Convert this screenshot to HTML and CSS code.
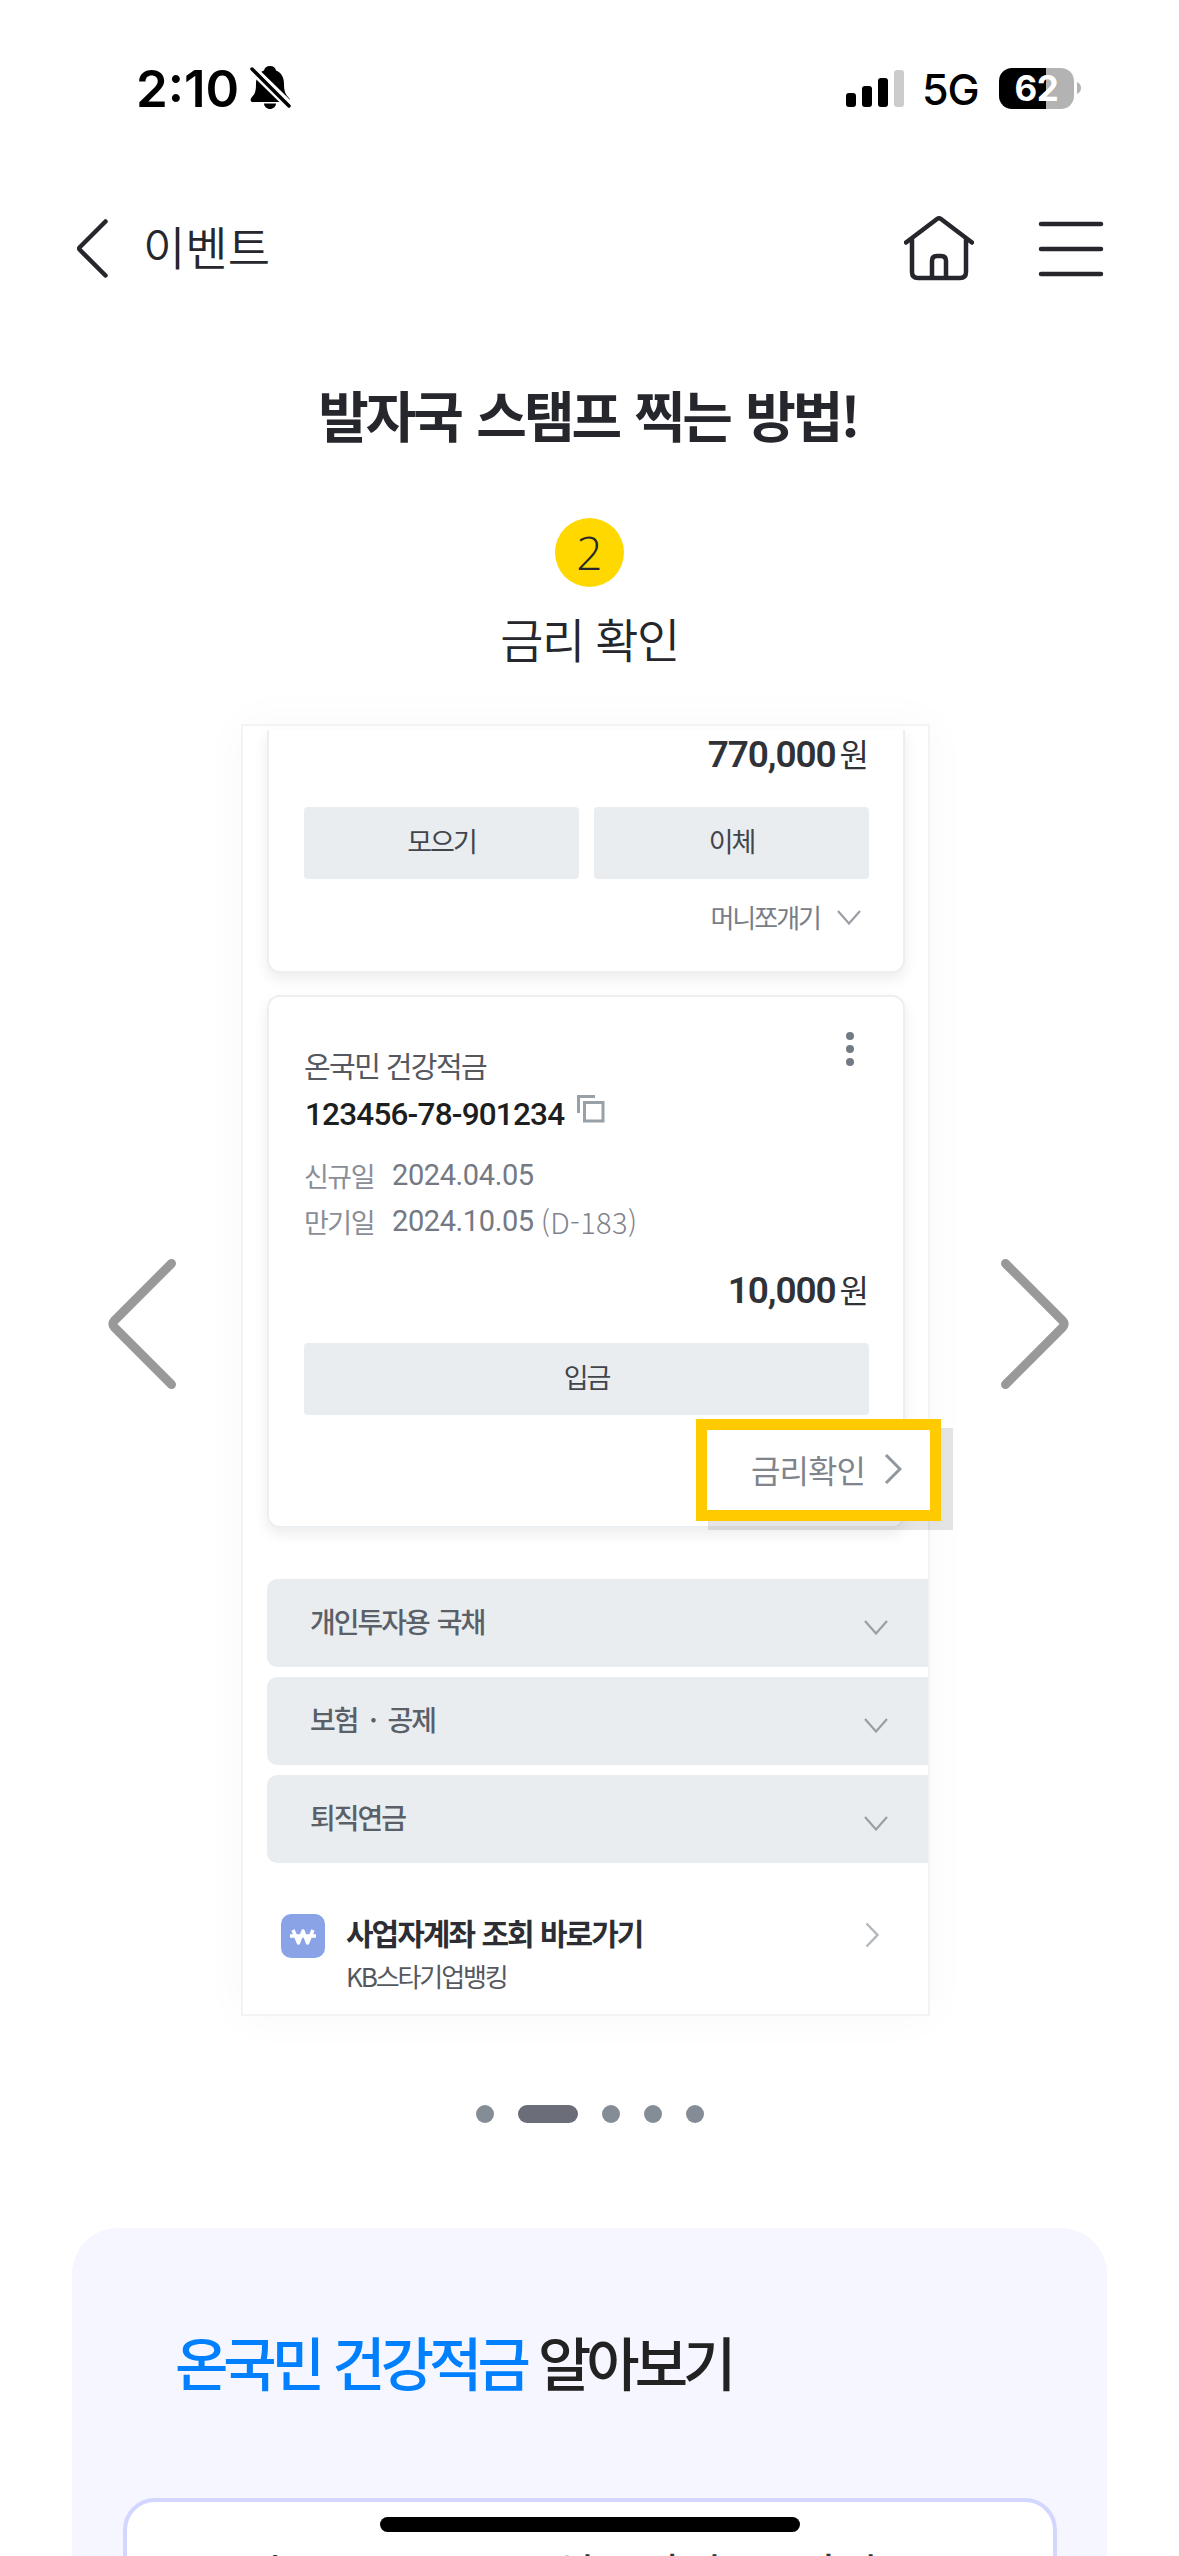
FILE: index.html
```html
<!DOCTYPE html>
<html lang="ko">
<head>
  <meta charset="UTF-8" />
  <title>이벤트</title>
  <meta name="viewport" content="width=device-width, initial-scale=1" />
  <link rel="stylesheet" href="styles.css">
</head>
<body>
  <div class="status-bar">
    <div class="status-left">
      <span class="time">2:10</span>
      <svg class="bell" width="42" height="46" viewBox="0 0 42 46">
        <path d="M20 1c3.500 0 5.500 2 6 4.500C32 8 34 13 34 19c0 8 2 11 5 14 2 2 1 4-1 4H3c-3 0-3-3-1-5 3-3 4-6 4-13C6 12 9 7.500 14 5.500 14.500 3 16.500 1 20 1z" />
        <path d="M14 38.500h12c0 3-3 5.500-6 5.500s-6-2.500-6-5.500z" />
        <path d="M1 3l40 39" stroke="#fff" stroke-width="9" />
        <path d="M2 4l37 37" stroke="#000" stroke-width="3.500" stroke-linecap="round" />
      </svg>
    </div>
    <div class="status-right">
      <div class="signal"><i class="b1"></i><i class="b2"></i><i class="b3"></i><i class="b4"></i></div>
      <span class="network">5G</span>
      <div class="battery">62</div>
      <svg class="battery-cap" width="4" height="12" viewBox="0 0 4 12"><path d="M0 0c2.500 1 4 3 4 6s-1.500 5-4 6z" fill="#b3b3b3" /></svg>
    </div>
  </div>

  <header class="header">
    <svg class="back" width="32" height="60" viewBox="0 0 32 60"><path d="M28.500 2.500L3 28q-1.500 1.500 0 3l25.500 25.500" /></svg>
    <span class="header-title">이벤트</span>
    <svg class="home" width="70" height="66" viewBox="0 0 70 66">
      <path d="M2 27.500L33 4q2-1.500 4 0l31 23.500M8 24v33q0 6 6 6h42q6 0 6-6V24" />
      <path d="M28 62V46q0-5 5-5h4q5 0 5 5v16" />
    </svg>
    <svg class="menu" width="66" height="56" viewBox="0 0 66 56"><path d="M3 3h60M3 28h60M3 53h60" /></svg>
  </header>

  <h1 class="title">발자국 스탬프 찍는 방법!</h1>
  <div class="step">2</div>
  <p class="step-name">금리 확인</p>

  <section class="carousel">
    <svg class="arrow" width="68" height="130" viewBox="0 0 68 130"><path d="M63.500 4.500L6.500 61.500q-3 3.500 0 7l57 57" /></svg>
    <div class="screen">
      <div class="card card-top">
        <div class="amount"><b>770,000</b>원</div>
        <div class="buttons">
          <div class="button">모으기</div>
          <div class="button">이체</div>
        </div>
        <div class="split">머니쪼개기
          <svg class="chev" width="24" height="15" viewBox="0 0 24 15"><path d="M1 1l11 12.500L23 1" /></svg>
        </div>
      </div>

      <div class="card card-main">
        <div class="product-row">
          <span class="product">온국민 건강적금</span>
          <svg class="more" width="8" height="34" viewBox="0 0 8 34"><circle cx="4" cy="4" r="4" /><circle cx="4" cy="17" r="4" /><circle cx="4" cy="30" r="4" /></svg>
        </div>
        <div class="account">123456-78-901234
          <svg class="copy" width="28" height="28" viewBox="0 0 28 28"><path d="M1.500 18V1.500H18M7.500 7.500h18.500v18.500H7.500z" /></svg>
        </div>
        <div class="date"><span>신규일</span><b>2024.04.05</b></div>
        <div class="date"><span>만기일</span><b>2024.10.05</b><em>(D-183)</em></div>
        <div class="amount amount-main"><b>10,000</b>원</div>
        <div class="button">입금</div>
        <div class="highlight">금리확인
          <svg class="chev-hl" width="18" height="32" viewBox="0 0 18 32"><path d="M2 2l14 14L2 30" /></svg>
        </div>
      </div>

      <div class="groups">
        <div class="group">개인투자용 국채<svg class="chev" width="24" height="15" viewBox="0 0 24 15"><path d="M1 1l11 12.500L23 1" /></svg></div>
        <div class="group group-wide">보험 · 공제<svg class="chev" width="24" height="15" viewBox="0 0 24 15"><path d="M1 1l11 12.500L23 1" /></svg></div>
        <div class="group">퇴직연금<svg class="chev" width="24" height="15" viewBox="0 0 24 15"><path d="M1 1l11 12.500L23 1" /></svg></div>
      </div>

      <div class="biz">
        <svg class="won" width="44" height="44" viewBox="0 0 44 44">
          <rect width="44" height="44" rx="10" fill="#8aa2e6" />
          <path d="M12 16l5.500 13L22 17l4.500 12L32 16M9 22h26" fill="none" stroke="#fff" stroke-width="3.500" stroke-linejoin="round" />
        </svg>
        <div class="biz-text">
          <div class="biz-title">사업자계좌 조회 바로가기</div>
          <div class="biz-sub">KB스타기업뱅킹</div>
        </div>
        <svg class="biz-go" width="14" height="26" viewBox="0 0 14 26"><path d="M1.500 1.500L12.500 13 1.500 24.500" /></svg>
      </div>
    </div>
    <svg class="arrow" width="68" height="130" viewBox="0 0 68 130"><path d="M4.500 4.500l57 57q3 3.500 0 7l-57 57" /></svg>
  </section>

  <div class="dots"><i></i><i class="on"></i><i></i><i></i><i></i></div>

  <section class="about">
    <h2 class="about-title"><span>온국민 건강적금</span> 알아보기</h2>
    <div class="about-card"><span class="w1">초</span><span class="w2">일부지원</span><span>지원</span></div>
  </section>

  <div class="home-indicator"></div>
</body>
</html>
```
FILE: styles.css
```css
* {
  box-sizing: border-box;
}

html, body {
  margin: 0;
  padding: 0;
  height: 2556px;
  overflow: hidden;
}

body {
  position: relative;
  background: #fff;
  color: #26272c;
  font-family: "Noto Sans CJK KR", sans-serif;
}

svg {
  display: block;
  flex: none;
}

/* status bar */
.status-bar {
  display: flex;
  justify-content: space-between;
  height: 176px;
  padding: 0 98px 0 136px;
  color: #000;
  font-family: Inter, sans-serif;
}

.status-left, .status-right {
  display: flex;
  align-items: center;
}

.time {
  font-size: 51px;
  font-weight: 600;
  letter-spacing: 0;
}

.bell {
  margin-left: 11px;
}

.signal {
  display: flex;
  align-items: flex-end;
  gap: 6px;
  height: 37px;
}

.signal i {
  width: 10px;
  background: #000;
  border-radius: 3px;
}

.signal .b1 { height: 14px; }
.signal .b2 { height: 21px; }
.signal .b3 { height: 29px; }
.signal .b4 { height: 37px; background: #ccc; }

.network {
  width: 57px;
  margin: 2px 20px 0 18px;
  font-size: 43px;
  font-weight: 450;
  letter-spacing: -1px;
}

.battery {
  width: 75px;
  height: 41px;
  border-radius: 13px;
  background: linear-gradient(90deg, #000 47px, #b3b3b3 47px);
  color: #fff;
  font-size: 35px;
  font-weight: 700;
  line-height: 41px;
  letter-spacing: -0.5px;
  text-align: center;
}

.battery-cap {
  margin-left: 3px;
}

/* header */
.header {
  display: flex;
  align-items: center;
  height: 146px;
  padding: 0 75px 0 77px;
}

.back, .home, .menu {
  fill: none;
  stroke: #26272c;
  stroke-width: 4.5;
  stroke-linecap: round;
}

.header-title {
  margin: 0 0 8px 34px;
  font-size: 46px;
  font-weight: 350;
  line-height: 60px;
}

.home {
  margin: 0 0 2px auto;
}

.menu {
  margin-left: 64px;
}

/* step heading */
.title {
  margin: 51px 0 0;
  padding-right: 3px;
  font-size: 55px;
  font-weight: 700;
  line-height: 80px;
  letter-spacing: -3px;
  word-spacing: 3px;
  text-align: center;
}

.step {
  width: 69px;
  height: 69px;
  margin: 65px auto 0;
  border-radius: 50%;
  background: #ffd800;
  font-family: "Open Sans", sans-serif;
  font-size: 46px;
  font-weight: 300;
  line-height: 69px;
  text-align: center;
}

.step-name {
  margin: 21px 0 0;
  font-size: 47px;
  font-weight: 350;
  line-height: 60px;
  letter-spacing: -1.5px;
  text-align: center;
}

/* carousel */
.carousel {
  display: flex;
  align-items: center;
  margin-top: 56px;
  padding-left: 108px;
}

.arrow {
  margin-bottom: 93px;
  fill: none;
  stroke: #999;
  stroke-width: 9;
  stroke-linecap: round;
}

.screen {
  width: 689px;
  height: 1292px;
  margin: 0 71px 0 65px;
  padding: 4px 0 0 24px;
  border: 2px solid #f3f3f4;
  background: #fff;
  box-shadow: 0 0 45px rgba(0, 0, 0, 0.03);
}

.card {
  width: 638px;
  padding: 0 34px 0 35px;
  border: 2px solid #eceff1;
  border-radius: 13px;
  background: #fff;
  box-shadow: 0 6px 14px rgba(0, 0, 0, 0.08);
}

.card-top {
  height: 243px;
  border-top: 0;
  border-radius: 0 0 13px 13px;
}

.amount {
  display: flex;
  align-items: baseline;
  justify-content: flex-end;
  height: 48px;
  color: #303238;
  font-size: 32px;
  font-weight: 400;
  line-height: 46px;
}

.amount b {
  margin-right: 4px;
  font-family: Roboto, sans-serif;
  font-size: 37px;
  font-weight: 600;
  letter-spacing: -1.1px;
}

.buttons {
  display: flex;
  gap: 15px;
  margin-top: 29px;
}

.button {
  flex: 1;
  height: 72px;
  border-radius: 4px;
  background: #e9edf0;
  color: #42454b;
  font-size: 27px;
  line-height: 68px;
  letter-spacing: -2px;
  text-align: center;
}

.split {
  display: flex;
  align-items: center;
  justify-content: flex-end;
  gap: 17px;
  height: 50px;
  margin-top: 12px;
  padding-right: 8px;
  color: #787d87;
  font-size: 26px;
  letter-spacing: -2px;
}

.split .chev {
  margin-top: 3px;
}

.chev {
  fill: none;
  stroke: #9a9fa5;
  stroke-width: 2.2;
}

.card-main {
  position: relative;
  height: 533px;
  margin-top: 22px;
  padding-top: 35px;
}

.product-row {
  display: flex;
  justify-content: space-between;
  height: 50px;
}

.product {
  margin-top: 8px;
  color: #55585e;
  font-size: 29px;
  line-height: 50px;
  letter-spacing: -1.6px;
}

.more {
  margin-right: 15px;
  fill: #727a84;
}

.account {
  display: flex;
  align-items: center;
  gap: 13px;
  height: 40px;
  margin-top: 12px;
  padding-left: 1px;
  color: #1d1e20;
  font-family: Roboto, sans-serif;
  font-size: 31.5px;
  font-weight: 500;
  letter-spacing: -0.8px;
}

.copy {
  margin-top: -10px;
  fill: none;
  stroke: #98a0a8;
  stroke-width: 3;
}

.date {
  display: flex;
  align-items: center;
  height: 46px;
  color: #8a8e96;
  font-size: 27px;
  letter-spacing: -1.5px;
}

.account + .date {
  margin-top: 18px;
}

.date span {
  width: 88px;
}

.date b {
  color: #747983;
  font-family: Roboto, sans-serif;
  font-size: 29px;
  font-weight: 400;
  letter-spacing: -0.4px;
}

.date em {
  margin-left: 7px;
  color: #7f838b;
  font-style: normal;
  font-size: 29px;
  font-weight: 300;
  letter-spacing: 0.4px;
}

.amount-main {
  margin-top: 21px;
  line-height: 48px;
}

.card-main .button {
  margin-top: 30px;
}

.highlight {
  position: absolute;
  top: 422px;
  left: 427px;
  display: flex;
  align-items: center;
  gap: 19px;
  width: 245px;
  height: 102px;
  padding: 0 0 3px 44px;
  border: 11px solid #ffcb00;
  background: #fff;
  box-shadow: 12px 9px 0 rgba(0, 0, 0, 0.1);
  color: #80848c;
  font-size: 32px;
  letter-spacing: -0.9px;
}

.chev-hl {
  fill: none;
  stroke: #92979d;
  stroke-width: 3;
}

.groups {
  display: flex;
  flex-direction: column;
  gap: 10px;
  margin-top: 51px;
}

.group {
  display: flex;
  align-items: center;
  justify-content: space-between;
  height: 88px;
  padding: 0 40px 5px 43px;
  border-radius: 10px 0 0 10px;
  background: #e9edf0;
  color: #5b5f68;
  font-size: 28px;
  font-weight: 500;
  letter-spacing: -2px;
  word-spacing: 2px;
}

.group-wide {
  word-spacing: 6px;
}

.group .chev {
  margin-top: 14px;
}

.biz {
  display: flex;
  align-items: flex-start;
  margin-top: 51px;
  padding: 0 49px 0 14px;
}

.biz-text {
  flex: 1;
  margin: -2px 0 0 21px;
}

.biz-title {
  color: #2c2e33;
  font-size: 30px;
  font-weight: 600;
  line-height: 40px;
  letter-spacing: -2px;
  word-spacing: 1px;
}

.biz-sub {
  margin-top: 2px;
  color: #55585e;
  font-size: 26px;
  line-height: 44px;
  letter-spacing: -2.1px;
}

.biz-go {
  margin-top: 8px;
  fill: none;
  stroke: #b4b9be;
  stroke-width: 2.5;
}

/* pager */
.dots {
  display: flex;
  justify-content: center;
  gap: 24px;
  margin-top: 89px;
}

.dots i {
  width: 18px;
  height: 18px;
  border-radius: 9px;
  background: #848d96;
}

.dots .on {
  width: 60px;
  background: #6b6e78;
}

/* about panel */
.about {
  height: 328px;
  margin: 105px 72px 0;
  padding: 93px 50px 0 51px;
  border-radius: 46px 46px 0 0;
  background: #f5f6ff;
  overflow: hidden;
}

.about-title {
  margin: 0 0 0 52px;
  color: #222;
  font-size: 58px;
  font-weight: 500;
  line-height: 80px;
  letter-spacing: -5px;
  word-spacing: 1px;
}

.about-title span {
  color: #0080ff;
}

.about-card {
  display: flex;
  height: 200px;
  margin-top: 97px;
  padding: 37px 0 0 127px;
  border: 4px solid #d3d6ff;
  border-radius: 32px;
  background: #fff;
  color: #333;
  font-size: 46px;
}

.w1 {
  width: 299px;
}

.w2 {
  width: 241px;
}

.home-indicator {
  position: absolute;
  left: 380px;
  top: 2517px;
  width: 420px;
  height: 15px;
  border-radius: 8px;
  background: #000;
}
```
